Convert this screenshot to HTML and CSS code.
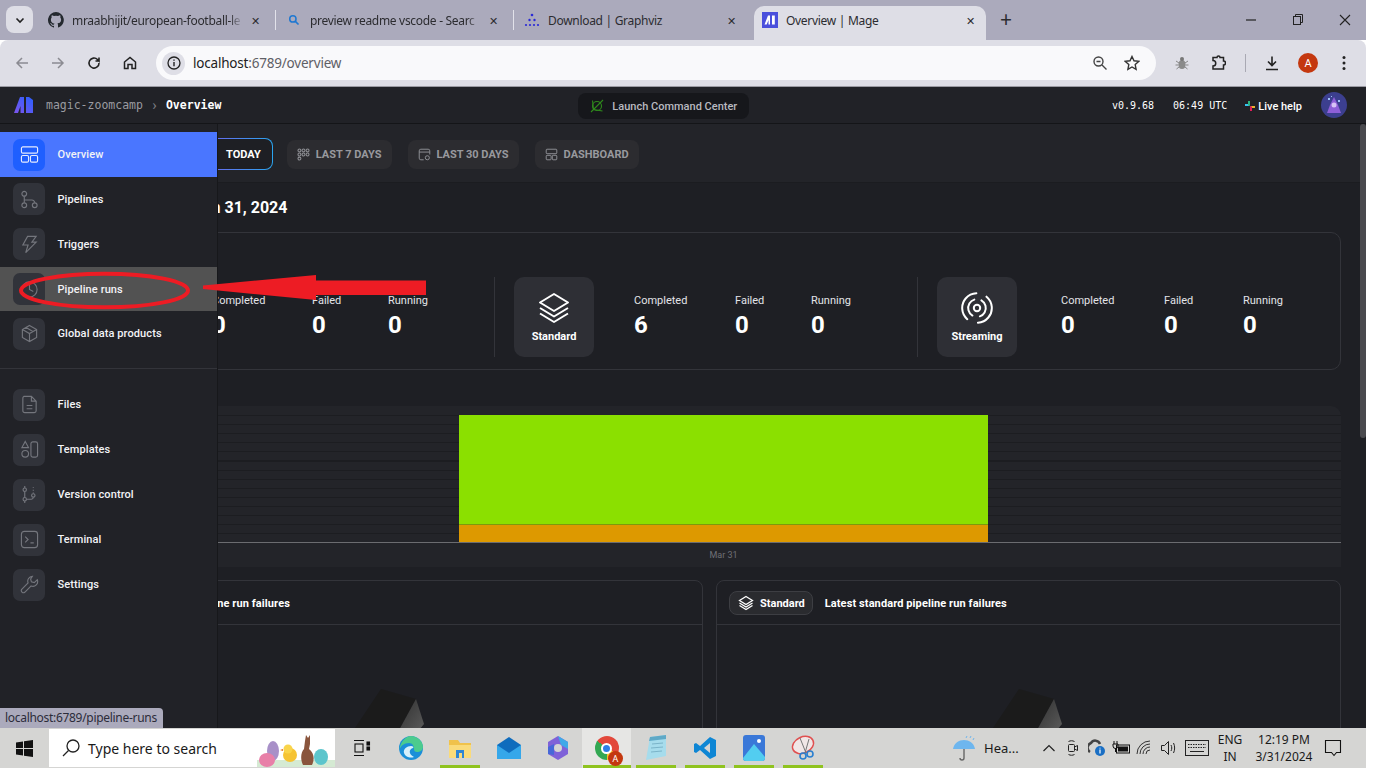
FILE: index.html
```html
<!DOCTYPE html>
<html lang="en">
<head>
    <meta charset="UTF-8">
    <title>Overview | Mage</title>
    <link rel="stylesheet" href="styles.css">
</head>
<body>
<div class="screen">

    <!-- Chrome tabs -->
    <div class="tabstrip">
        <button class="tab-search"><svg width="12" height="12" viewBox="0 0 12 12"><path d="M2.5 4.5 6 8l3.5-3.5" fill="none" stroke="#222" stroke-width="1.6"/></svg></button>
        <div class="tab">
            <svg class="favicon" viewBox="0 0 16 16"><path fill="#24292f" d="M8 0a8 8 0 0 0-2.5 15.6c.4.1.5-.2.5-.4v-1.4c-2.2.5-2.7-1-2.7-1-.4-.9-.9-1.2-.9-1.2-.7-.5.1-.5.1-.5.8.1 1.2.8 1.2.8.7 1.2 1.9.9 2.3.7.1-.5.3-.9.5-1.1-1.8-.2-3.6-.9-3.6-4 0-.9.3-1.6.8-2.1-.1-.2-.4-1 .1-2.1 0 0 .7-.2 2.2.8a7.6 7.6 0 0 1 4 0c1.5-1 2.2-.8 2.2-.8.4 1.1.2 1.9.1 2.1.5.6.8 1.3.8 2.1 0 3.1-1.9 3.7-3.7 3.9.3.3.6.8.6 1.5v2.2c0 .2.1.5.6.4A8 8 0 0 0 8 0z"/></svg>
            <span class="tab-title">mraabhijit/european-football-le</span>
            <span class="tab-close">✕</span>
        </div>
        <span class="tab-sep"></span>
        <div class="tab">
            <svg class="favicon favicon-small" viewBox="0 0 16 16"><circle cx="6.5" cy="6.5" r="4.2" fill="none" stroke="#1f78d1" stroke-width="2"/><path d="m9.5 9.5 4.5 4.5" stroke="#1f78d1" stroke-width="2.2"/></svg>
            <span class="tab-title">preview readme vscode - Searc</span>
            <span class="tab-close">✕</span>
        </div>
        <span class="tab-sep"></span>
        <div class="tab">
            <svg class="favicon" viewBox="0 0 16 16" fill="#2a2ad6"><circle cx="8" cy="3" r="1.3"/><circle cx="5.5" cy="8" r="1.2"/><circle cx="10.5" cy="8" r="1.2"/><circle cx="2" cy="13" r="1.1"/><circle cx="6" cy="13" r="1.1"/><circle cx="10" cy="13" r="1.1"/><circle cx="14" cy="13" r="1.1"/></svg>
            <span class="tab-title tab-title-plain">Download | Graphviz</span>
            <span class="tab-close">✕</span>
        </div>
        <div class="tab tab-active">
            <svg class="favicon" viewBox="0 0 16 16"><rect width="16" height="16" fill="#4a4fdc"/><path d="M2.5 12.5 6 3.5h2v9H6.5V8l-1.8 4.5zM10 3.500h2.800v9H10z" fill="#fff"/></svg>
            <span class="tab-title tab-title-plain">Overview | Mage</span>
            <span class="tab-close">✕</span>
        </div>
        <span class="tab-new">+</span>
        <div class="window-controls">
            <svg width="46" height="14" viewBox="0 0 46 14"><path d="M18 7h10" stroke="#222" stroke-width="1.2"/></svg>
            <svg width="46" height="14" viewBox="0 0 46 14" fill="none" stroke="#222"><rect x="19.5" y="3.5" width="7" height="8"/><path d="M21.5 3.5v-2h7v8h-2"/></svg>
            <svg width="46" height="14" viewBox="0 0 46 14"><path d="m20 2 10 10m0-10L20 12" stroke="#222" stroke-width="1.1"/></svg>
        </div>
    </div>

    <!-- Chrome toolbar -->
    <div class="toolbar">
        <svg class="tool" viewBox="0 0 16 16"><path d="M14 8H3m5-5L3 8l5 5" fill="none" stroke="#8b8b92" stroke-width="1.5"/></svg>
        <svg class="tool" viewBox="0 0 16 16"><path d="M2 8h11M8 3l5 5-5 5" fill="none" stroke="#8b8b92" stroke-width="1.5"/></svg>
        <svg class="tool" viewBox="0 0 16 16"><path d="M13 8a5 5 0 1 1-1.5-3.5L13 6V2.500M13 6H9.500" fill="none" stroke="#222" stroke-width="1.6"/></svg>
        <svg class="tool" viewBox="0 0 16 16"><path d="M2.500 7 8 2.500 13.500 7v6.500H10V9.500H6v4H2.500z" fill="none" stroke="#222" stroke-width="1.5"/></svg>
        <div class="omnibox">
            <span class="site-info"><svg width="14" height="14" viewBox="0 0 14 14"><circle cx="7" cy="7" r="6" fill="none" stroke="#222" stroke-width="1.3"/><path d="M7 6v4.200M7 3.500v1.300" stroke="#222" stroke-width="1.4"/></svg></span>
            <span class="url">localhost<span class="url-path">:6789/overview</span></span>
            <svg class="omni-icon" viewBox="0 0 16 16" fill="none" stroke="#444" stroke-width="1.4"><circle cx="6.5" cy="6.5" r="4.5"/><path d="m10 10 4.500 4.500M4.500 6.500h4"/></svg>
            <svg class="omni-icon" viewBox="0 0 16 16"><path d="m8 1.500 2 4.300 4.700.6-3.500 3.200.9 4.700L8 12l-4.100 2.300.9-4.700-3.500-3.200L6 5.800z" fill="none" stroke="#333" stroke-width="1.4"/></svg>
        </div>
        <div class="toolbar-right">
            <svg class="tool" viewBox="0 0 16 16"><ellipse cx="8" cy="9.500" rx="3.500" ry="4.500" fill="#8a8a8a"/><circle cx="8" cy="4" r="2" fill="#777"/><path d="M2 6l3 2M14 6l-3 2M1.500 10h3m10 0h-3M2.500 14l2.500-2m8.500 2L11 12" stroke="#888"/></svg>
            <svg class="tool" viewBox="0 0 16 16"><path d="M3 2.500h4a1.500 1.500 0 0 1 3 0h3.500V6a1.500 1.500 0 0 1 0 4v4H3v-3a2 2 0 0 0 0-5.500z" fill="none" stroke="#222" stroke-width="1.5"/></svg>
            <span class="toolbar-sep"></span>
            <svg class="tool" viewBox="0 0 16 16"><path d="M8 1.500V10M4 6.500 8 10.500l4-4M2 14.500h12" fill="none" stroke="#222" stroke-width="1.6"/></svg>
            <span class="profile">A</span>
            <svg class="tool" viewBox="0 0 16 16" fill="#222"><circle cx="8" cy="2.500" r="1.500"/><circle cx="8" cy="8" r="1.500"/><circle cx="8" cy="13.500" r="1.500"/></svg>
        </div>
    </div>

    <!-- Mage header -->
    <header class="app-header">
        <svg class="logo" width="20" height="16" viewBox="0 0 20 16">
            <defs><linearGradient id="logoGrad" x1="0" y1="1" x2="1" y2="0"><stop offset="0" stop-color="#7d55ec"/><stop offset="1" stop-color="#2a60fe"/></linearGradient></defs>
            <path d="M0 16 6 0h4v16H6.500V9L4 16zM12 0h3l4 3v13h-7z" fill="url(#logoGrad)"/>
        </svg>
        <span class="crumb">magic-zoomcamp</span>
        <span class="crumb-arrow">›</span>
        <span class="crumb-current">Overview</span>
        <div class="header-center">
            <div class="launch">
                <svg width="16" height="16" viewBox="0 0 16 16" fill="none" stroke="#2f8a1c" stroke-width="1.1"><circle cx="8" cy="8" r="4.500"/><path d="M2 14 14 2M3.500 2.500c.5 3 .5 6 1 9 3 .5 6 1 9 1.500"/></svg>
                Launch Command Center
            </div>
        </div>
        <span class="version">v0.9.68</span>
        <span class="clock">06:49 UTC</span>
        <span class="live-help">
            <svg width="10" height="10" viewBox="0 0 10 10"><rect x="0" y="3" width="4.500" height="2" fill="#36c5f0"/><rect x="3" y="0" width="2" height="4.500" fill="#2eb67d"/><rect x="5.500" y="5" width="4.500" height="2" fill="#ecb22e"/><rect x="5" y="5.500" width="2" height="4.500" fill="#e01e5a"/></svg>
            Live help
        </span>
        <span class="avatar"><svg width="18" height="20" viewBox="0 0 18 20"><path d="M9 2 5 10l-3 8h14l-3-8z" fill="#8e5fd8"/><circle cx="9" cy="10" r="2.500" fill="#d8c4f6"/><path d="M3 3h2v2H3zM13 5h2v2h-2zM6 1h1v1H6z" fill="#9fc0f5"/></svg></span>
    </header>

    <div class="app-body">
        <main class="content">
            <div class="filters">
                <button class="filter filter-active">
                    <svg width="16" height="16" viewBox="0 0 16 16" fill="none" stroke="#fff" stroke-width="1.2"><circle cx="8" cy="8" r="6"/></svg>
                    TODAY
                </button>
                <button class="filter">
                    <svg width="13" height="13" viewBox="0 0 16 16" fill="none" stroke="#8e8f94" stroke-width="1.3"><circle cx="3" cy="3" r="1.800"/><circle cx="8" cy="3" r="1.800"/><circle cx="13" cy="3" r="1.800"/><circle cx="3" cy="8" r="1.800"/><circle cx="8" cy="8" r="1.800"/><circle cx="13" cy="8" r="1.800"/><circle cx="3" cy="13" r="1.800"/></svg>
                    LAST 7 DAYS
                </button>
                <button class="filter">
                    <svg width="13" height="13" viewBox="0 0 16 16" fill="none" stroke="#8e8f94" stroke-width="1.2"><path d="M7 14.500H3.500a2 2 0 0 1-2-2v-9a2 2 0 0 1 2-2h9a2 2 0 0 1 2 2V8M1.500 5h13"/><circle cx="11.500" cy="12" r="2.500"/></svg>
                    LAST 30 DAYS
                </button>
                <button class="filter">
                    <svg width="13" height="13" viewBox="0 0 16 16" fill="none" stroke="#8e8f94" stroke-width="1.2"><rect x="1.500" y="1.500" width="13" height="5.500" rx="1"/><rect x="1.500" y="9" width="6" height="5.500" rx="1"/><rect x="9" y="9" width="5.500" height="5.500" rx="1"/></svg>
                    DASHBOARD
                </button>
            </div>

            <div class="content-inner">
                <h2 class="date-title">Jan 31, 2024</h2>

                <section class="stats-card">
                    <div class="stat-group stat-group-first">
                        <div class="stat-tile"></div>
                        <div class="stats">
                            <div><p class="stat-label">Completed</p><p class="stat-value">0</p></div>
                            <div><p class="stat-label">Failed</p><p class="stat-value">0</p></div>
                            <div><p class="stat-label">Running</p><p class="stat-value">0</p></div>
                        </div>
                    </div>
                    <div class="stat-group">
                        <div class="stat-tile">
                            <svg width="32" height="32" viewBox="0 0 32 32" fill="none" stroke="#fff" stroke-width="2" stroke-linejoin="round"><path d="M16 2 30 10.500 16 19 2 10.500z"/><path d="m2 16 14 8.500L30 16M2 21.500 16 30l14-8.500"/></svg>
                            <span>Standard</span>
                        </div>
                        <div class="stats">
                            <div><p class="stat-label">Completed</p><p class="stat-value">6</p></div>
                            <div><p class="stat-label">Failed</p><p class="stat-value">0</p></div>
                            <div><p class="stat-label">Running</p><p class="stat-value">0</p></div>
                        </div>
                    </div>
                    <div class="stat-group">
                        <div class="stat-tile">
                            <svg width="32" height="32" viewBox="0 0 32 32" fill="none" stroke="#fff" stroke-width="2" stroke-linecap="round"><circle cx="16" cy="16" r="3.200"/><circle cx="16" cy="16" r="8.800" stroke-dasharray="20 7.650" transform="rotate(-60 16 16)"/><circle cx="16" cy="16" r="14.800" stroke-dasharray="35 11.500" transform="rotate(-50 16 16)"/></svg>
                            <span>Streaming</span>
                        </div>
                        <div class="stats stats-wide">
                            <div><p class="stat-label">Completed</p><p class="stat-value">0</p></div>
                            <div><p class="stat-label">Failed</p><p class="stat-value">0</p></div>
                            <div><p class="stat-label">Running</p><p class="stat-value">0</p></div>
                        </div>
                    </div>
                </section>

                <section class="chart">
                    <div class="plot">
                        <div class="bar">
                            <div class="bar-success"></div>
                            <div class="bar-failed"></div>
                        </div>
                    </div>
                    <div class="x-axis"><span>Mar 31</span></div>
                </section>

                <div class="failures">
                    <section class="failure-card">
                        <div class="failure-head">
                            <span class="tag"><svg width="16" height="16" viewBox="0 0 32 32" fill="none" stroke="#fff" stroke-width="2.5"><path d="M16 3 29 11 16 19 3 11z"/><path d="m3 16 13 8 13-8M3 21l13 8 13-8"/></svg>All</span>
                            <span class="failure-title">Latest pipeline run failures</span>
                        </div>
                        <svg class="empty-art" width="90" height="60" viewBox="0 0 90 60"><path d="M39 6 74 16 50 60H3z" fill="#1b1b1b"/><path d="M74 16 82 41 66 60H50z" fill="url(#cubeSide)"/></svg>
                    </section>
                    <section class="failure-card">
                        <div class="failure-head">
                            <span class="tag"><svg width="16" height="16" viewBox="0 0 32 32" fill="none" stroke="#fff" stroke-width="2.5"><path d="M16 3 29 11 16 19 3 11z"/><path d="m3 16 13 8 13-8M3 21l13 8 13-8"/></svg>Standard</span>
                            <span class="failure-title">Latest standard pipeline run failures</span>
                        </div>
                        <svg class="empty-art" width="90" height="60" viewBox="0 0 90 60">
                            <defs><linearGradient id="cubeSide" x1="0" y1="0" x2="1" y2="1"><stop offset="0" stop-color="#2a2a2a"/><stop offset="1" stop-color="#626262"/></linearGradient></defs>
                            <path d="M39 6 74 16 50 60H3z" fill="#1b1b1b"/><path d="M74 16 82 41 66 60H50z" fill="url(#cubeSide)"/>
                        </svg>
                    </section>
                </div>
            </div>
        </main>
        <div class="scrollbar"><div class="scroll-thumb"></div></div>

        <!-- Nav flyout over the page -->
        <nav class="sidebar">
            <a class="nav-item nav-selected"><span class="nav-icon"><svg viewBox="0 0 20 20"><rect x="1.500" y="2" width="17" height="6.500" rx="1.500"/><rect x="1.500" y="11" width="7.500" height="7" rx="1.500"/><rect x="11" y="11" width="7.500" height="7" rx="1.500"/></svg></span>Overview</a>
            <a class="nav-item"><span class="nav-icon"><svg viewBox="0 0 20 20"><circle cx="4.500" cy="4" r="2.500"/><circle cx="4.500" cy="16" r="2.500"/><circle cx="15.500" cy="16" r="2.500"/><path d="M4.500 6.500v7M4.500 10.500h8a3 3 0 0 1 3 3"/></svg></span>Pipelines</a>
            <a class="nav-item"><span class="nav-icon"><svg viewBox="0 0 20 20"><path d="M8 1.500h9l-4.500 6H17L6 18.500l2.500-8H3z"/></svg></span>Triggers</a>
            <a class="nav-item nav-hover"><span class="nav-icon"><svg viewBox="0 0 20 20"><circle cx="10" cy="10" r="8"/><path d="M10 5v5l4 2"/></svg></span>Pipeline runs</a>
            <a class="nav-item"><span class="nav-icon"><svg viewBox="0 0 20 20"><path d="m10 1.500 7.500 4.300v8.400L10 18.500l-7.500-4.300V5.800zM2.500 5.800 10 10l7.500-4.200M10 10v8.500M6 3.500l7.500 4.500"/></svg></span>Global data products</a>
            <div class="nav-divider"></div>
            <a class="nav-item"><span class="nav-icon"><svg viewBox="0 0 20 20"><path d="M4 1.500h8l5 5v10a2 2 0 0 1-2 2H5a2 2 0 0 1-2-2v-13a2 2 0 0 1 1-2zM12 1.500v5h5M7 11h6M7 14.500h6"/></svg></span>Files</a>
            <a class="nav-item"><span class="nav-icon"><svg viewBox="0 0 20 20"><path d="M5.500 1.500 9 8H2z"/><circle cx="5.500" cy="14.500" r="3.500"/><rect x="11.500" y="2" width="7" height="16" rx="2"/></svg></span>Templates</a>
            <a class="nav-item"><span class="nav-icon"><svg viewBox="0 0 20 20"><circle cx="5" cy="5" r="1.800"/><circle cx="5" cy="15" r="1.800"/><circle cx="14" cy="11" r="1.800"/><path d="M5 1v2.200M5 6.800v6.400M5 16.800V19M6.800 15H12a2 2 0 0 0 2-2v-.2M14 2v1M14 5v1M14 8v1"/></svg></span>Version control</a>
            <a class="nav-item"><span class="nav-icon"><svg viewBox="0 0 20 20"><rect x="1.500" y="1.500" width="17" height="17" rx="3"/><path d="m5.500 7 3 3-3 3M11 13.500h3.500"/></svg></span>Terminal</a>
            <a class="nav-item"><span class="nav-icon"><svg viewBox="0 0 20 20"><path d="M13 1.500a5 5 0 0 0-4.500 6.800L1.800 15a2.300 2.300 0 0 0 3.200 3.200l6.700-6.700A5 5 0 0 0 18.200 5l-3.200 3-3-.8-.8-3z"/></svg></span>Settings</a>
        </nav>

        <div class="status-bubble">localhost:6789/pipeline-runs</div>
    </div>

    <!-- Windows taskbar -->
    <div class="taskbar">
        <svg class="win-logo" width="17" height="17" viewBox="0 0 17 17" fill="#111"><path d="M0 2.400 7 1.400V8H0zM8 1.300 17 0v8H8zM0 9h7v6.600L0 14.600zM8 9h9v8l-9-1.300z"/></svg>
        <div class="search-box">
            <svg width="20" height="20" viewBox="0 0 20 20" fill="none" stroke="#222" stroke-width="1.3"><circle cx="12" cy="8" r="6"/><path d="M7.500 12.500 2 18"/></svg>
            <span class="search-text">Type here to search</span>
            <svg class="easter" width="78" height="38" viewBox="0 0 78 38">
                <rect x="0" y="31" width="78" height="7" fill="#d5ead3"/>
                <ellipse cx="16" cy="22" rx="6" ry="10" fill="#a890c8"/>
                <ellipse cx="10" cy="31" rx="8" ry="7" fill="#e87fa8"/>
                <ellipse cx="64" cy="28" rx="7" ry="8" fill="#5cc5cc"/>
                <circle cx="33" cy="26" r="7" fill="#f6c334"/><circle cx="31" cy="20" r="4.500" fill="#f9d44a"/><path d="m26 20-3 1 3 1z" fill="#e2701a"/>
                <path d="M46 36c-3-6-2-13 1-16l1-8 1-6 2 3 2-3v9l-1 5c5 4 6 10 3 16z" fill="#8a553d"/>
            </svg>
        </div>
        <div class="task-apps">
            <span class="task-app"><svg width="18" height="18" viewBox="0 0 18 18" fill="none" stroke="#111" stroke-width="1.1"><path d="M1 1.500h10M1 16.500h10"/><rect x="2" y="5" width="8" height="8"/><rect x="14" y="3" width="2.500" height="3" fill="#111"/><rect x="14" y="8" width="2.500" height="3" fill="#111"/></svg></span>
            <span class="task-app"><svg width="26" height="26" viewBox="0 0 26 26"><circle cx="13" cy="13" r="12" fill="#1b8fd8"/><path d="M1.500 15C2 7 8 1 13 1c6 0 12 5 12 11 0 3-3 5-6 5-2 0-3-1-3-3 0-3-1.500-6-5-6-5 0-8.500 3-9.500 7z" fill="#4ccb8e"/><path d="M13 11c2 0 3 1 2 2-4 1-5 6 1 9-3 1-8 1-10-4-1-4 3-7 7-7z" fill="#d6f0fb"/></svg></span>
            <span class="task-app task-open"><svg width="24" height="22" viewBox="0 0 24 22"><path d="M1 3h9l2 3h11v15H1z" fill="#f0c24b"/><rect x="1" y="8" width="22" height="13" fill="#fadb7a"/><rect x="8" y="13" width="8" height="8" fill="#2f86d4"/><rect x="11" y="16" width="3" height="5" fill="#fadb7a"/></svg></span>
            <span class="task-app"><svg width="26" height="24" viewBox="0 0 26 24"><path d="M1 9 13 1l12 8v14H1z" fill="#0f6cbd"/><path d="m1 9 12 8 12-8v14H1z" fill="#35a7ea"/></svg></span>
            <span class="task-app"><svg width="22" height="26" viewBox="0 0 22 26"><path d="M11 1 21 7v12l-10 6L1 19V7z" fill="#7f62d8"/><path d="M11 1 21 7v7l-7-4z" fill="#3fa9e8"/><path d="M1 12l6-3v11l-6-1z" fill="#4668d8"/><path d="M11 9a4 4 0 1 1 0 8 4 4 0 0 1 0-8z" fill="#d4d4d4"/></svg></span>
            <span class="task-app task-open task-active"><span class="chrome-icon"><span class="chrome-dot"></span></span><span class="chrome-badge">A</span></span>
            <span class="task-app task-open"><svg width="24" height="28" viewBox="0 0 24 28"><path d="M6 3 22 1v21L2 26z" fill="#a6dcec"/><path d="M6 3 22 1v4L5 7z" fill="#5fa9c7"/><path d="M8 10l11-1M7 14l12-1M7 18l11-1" stroke="#7bb4c9"/></svg></span>
            <span class="task-app task-open"><svg width="24" height="24" viewBox="0 0 24 24"><path d="M17 1 23 4v16l-6 3L7 14l-4 3-2-1V8l2-1 4 3z" fill="#0e86d4"/><path d="M17 7v10l-6-5z" fill="#d4d4d4"/></svg></span>
            <span class="task-app task-open"><svg width="24" height="28" viewBox="0 0 24 28"><rect x="1" y="1" width="22" height="26" rx="3" fill="#3a78d8"/><path d="M1 24 12 10l11 13v1a3 3 0 0 1-3 3H4a3 3 0 0 1-3-3z" fill="#52cdf0"/><circle cx="17" cy="7" r="2" fill="#fff"/></svg></span>
            <span class="task-app task-open"><svg width="26" height="26" viewBox="0 0 26 26" fill="none"><ellipse cx="13" cy="10" rx="11" ry="8" fill="#f1e6e6" stroke="#e05050" stroke-width="1.5" transform="rotate(-25 13 10)"/><path d="m10 3 6 15M19 4l-4 14" stroke="#777"/><circle cx="13" cy="21" r="3" stroke="#2a7fd0" stroke-width="1.6"/><circle cx="20" cy="19" r="3" stroke="#2a7fd0" stroke-width="1.6"/></svg></span>
        </div>
        <div class="tray">
            <span class="weather">
                <svg width="24" height="26" viewBox="0 0 24 26"><path d="M1 14C2 8 7 5 12 5s10 3 11 9z" fill="#6eb6ee"/><path d="M12 14v9a2 2 0 0 1-4 0" stroke="#666" stroke-width="1.4" fill="none"/><path d="m15 1-1 2m5-2-1 2m4 0-1 2" stroke="#6eb6ee"/></svg>
                Hea...
            </span>
            <div class="tray-icons">
                <svg width="14" height="14" viewBox="0 0 14 14"><path d="m1.500 10 5.500-5.500 5.500 5.500" fill="none" stroke="#222" stroke-width="1.2"/></svg>
                <svg width="14" height="18" viewBox="0 0 14 18" fill="none" stroke="#222"><rect x="2.500" y="5.500" width="6" height="7" rx="1"/><path d="m8.500 8 3-1.500v5l-3-1.500M2.500 2.500c2-1 4-1 6 0M2.500 15.500c2 1 4 1 6 0"/></svg>
                <svg width="18" height="18" viewBox="0 0 18 18"><path d="M2 13a5 5 0 0 1 1-9 5 5 0 0 1 9 1" fill="none" stroke="#444" stroke-width="2.5"/><circle cx="12" cy="12" r="5" fill="#1a6fc4"/><path d="M12 10.500v4M12 8.800v.8" stroke="#fff" stroke-width="1.2"/></svg>
                <svg width="18" height="16" viewBox="0 0 18 16"><rect x="4.500" y="5" width="13" height="8" fill="none" stroke="#111"/><rect x="6" y="6.500" width="10" height="5" fill="#111"/><path d="M2 1v3M5 1v3M1 4h5v2a2 2 0 0 1-5 0zM3.500 8v4" stroke="#111" fill="none"/></svg>
                <svg width="18" height="16" viewBox="0 0 18 16" fill="none" stroke="#333"><path d="M1 14A13 13 0 0 1 14 1M4 14A10 10 0 0 1 14 4M7 14a7 7 0 0 1 7-7M10 14a4 4 0 0 1 4-4"/></svg>
                <svg width="18" height="16" viewBox="0 0 18 16" fill="none" stroke="#222"><path d="M1.500 5.500h3l4-4v13l-4-4h-3zM11 5c1 2 1 4 0 6M13.500 3c1.500 3 1.500 7 0 10"/></svg>
                <svg class="tray-keyboard" width="24" height="16" viewBox="0 0 24 16" fill="none" stroke="#222"><rect x=".5" y=".5" width="23" height="15"/><path d="M3 4.500h18M3 7.500h18" stroke-dasharray="1.500 1"/><path d="M5 11.500h14"/></svg>
            </div>
            <div class="tray-lang">ENG<br>IN</div>
            <div class="tray-clock">12:19 PM<br>3/31/2024</div>
            <svg class="tray-notify" width="18" height="18" viewBox="0 0 18 18"><path d="M1.500 1.500h15v12h-4l-2.500 3-2.500-3h-6z" fill="none" stroke="#111" stroke-width="1.1"/></svg>
        </div>
    </div>

    <!-- Red markup drawn on top of the screenshot -->
    <svg class="markup" width="1366" height="768" viewBox="0 0 1366 768">
        <ellipse cx="104.5" cy="290.5" rx="83.5" ry="16.8" fill="none" stroke="#ed1c24" stroke-width="4"/>
        <path d="M203 285.500v3.500L316 300v-5h110v-14.500H316V275z" fill="#ed1c24"/>
    </svg>
</div>
</body>
</html>
```

FILE: styles.css
```css
* {
    box-sizing: border-box;
}

html, body {
    margin: 0;
    background: #fff;
    overflow: hidden;
}

p, h2 {
    margin: 0;
}

svg {
    display: block;
    flex: none;
}

.screen {
    position: relative;
    display: flex;
    flex-direction: column;
    width: 1366px;
    height: 768px;
    overflow: hidden;
    font-family: Roboto, Arial, sans-serif;
}

/* Chrome tabs */
.tabstrip {
    display: flex;
    align-items: flex-start;
    flex: none;
    height: 40px;
    padding: 6px 0 0 6px;
    background: #abaabc;
    color: #2c2c30;
    font-family: "Noto Sans", sans-serif;
    font-size: 12px;
}

.tab-search {
    flex: none;
    display: flex;
    align-items: center;
    justify-content: center;
    width: 27px;
    height: 27px;
    margin-right: 5px;
    padding: 0;
    border: none;
    border-radius: 8px;
    background: #dedee6;
}

.tab {
    display: flex;
    align-items: center;
    flex: none;
    width: 237px;
    height: 28px;
    padding: 0 8px 0 10px;
}

.favicon {
    width: 16px;
    height: 16px;
    margin-right: 8px;
}

.favicon-small {
    width: 12px;
    height: 12px;
    margin: 0 10px 0 2px;
}

.tab-title {
    flex: 1;
    overflow: hidden;
    letter-spacing: -0.3px;
    white-space: nowrap;
    -webkit-mask-image: linear-gradient(to right, #000 92%, transparent);
    mask-image: linear-gradient(to right, #000 92%, transparent);
}

.tab-title-plain {
    -webkit-mask-image: none;
    mask-image: none;
}

.tab-close {
    width: 24px;
    text-align: center;
    font-size: 11px;
}

.tab-sep {
    flex: none;
    width: 1px;
    height: 20px;
    margin-top: 4px;
    background: #e2e2ea;
}

.tab-active {
    width: 232px;
    height: 34px;
    margin-left: 3px;
    padding: 0 4px 6px 8px;
    border-radius: 10px 10px 0 0;
    background: #dedee6;
}

.tab-new {
    width: 40px;
    height: 28px;
    text-align: center;
    font-size: 21px;
    line-height: 26px;
}

.window-controls {
    display: flex;
    align-items: center;
    height: 28px;
    margin-left: auto;
}

/* Chrome toolbar */
.toolbar {
    display: flex;
    align-items: center;
    flex: none;
    height: 47px;
    padding: 0 14px;
    border-bottom: 1px solid #9b9ba3;
    border-radius: 8px 8px 0 0;
    background: #dedee6;
}

.tool {
    width: 16px;
    height: 16px;
    margin-right: 20px;
}

.omnibox {
    display: flex;
    flex: none;
    align-items: center;
    width: 1000px;
    height: 34px;
    margin-left: -2px;
    padding: 0 16px 0 6px;
    border-radius: 17px;
    background: #f9f9fb;
}

.site-info {
    display: flex;
    align-items: center;
    justify-content: center;
    width: 23px;
    height: 23px;
    border-radius: 50%;
    background: #dedee6;
}

.url {
    flex: 1;
    margin-left: 8px;
    color: #222;
    font-family: "Noto Sans", sans-serif;
    font-size: 13.5px;
    letter-spacing: -0.2px;
}

.url-path {
    color: #5f6066;
}

.omni-icon {
    width: 16px;
    height: 16px;
    margin-left: 16px;
}

.toolbar-right {
    display: flex;
    align-items: center;
    margin-left: 18px;
}

.toolbar-sep {
    width: 1px;
    height: 18px;
    margin: 0 18px 0 -1px;
    background: #a9a9b3;
}

.profile {
    display: flex;
    align-items: center;
    justify-content: center;
    width: 20px;
    height: 20px;
    margin: 0 18px 0 -2px;
    border-radius: 50%;
    background: #c4380f;
    color: #fff;
    font-size: 11px;
}

/* Mage header */
.app-header {
    display: flex;
    align-items: center;
    flex: none;
    height: 37px;
    padding: 0 19px 0 14px;
    border-bottom: 1px solid #141518;
    background: #212227;
    color: #fff;
    font-family: "DejaVu Sans Mono", monospace;
}

.crumb {
    margin-left: 12px;
    color: #9b9ca1;
    font-size: 11.5px;
}

.crumb-arrow {
    width: 23px;
    color: #7c7d82;
    font-family: Roboto, sans-serif;
    font-size: 15px;
    text-align: center;
}

.crumb-current {
    font-size: 11.5px;
    font-weight: 700;
}

.header-center {
    flex: 1;
    display: flex;
    padding-left: 357px;
}

.launch {
    display: flex;
    align-items: center;
    gap: 7px;
    width: 171px;
    height: 26px;
    margin-top: 2px;
    padding-left: 11px;
    border-radius: 8px;
    background: #16171b;
    color: #b9bac0;
    font-family: Roboto, sans-serif;
    font-size: 11px;
    font-weight: 500;
}

.version, .clock {
    font-size: 10px;
}

.clock {
    margin-left: 19px;
}

.live-help {
    display: flex;
    align-items: center;
    gap: 3px;
    margin: 2px 0 0 18px;
    font-family: Roboto, sans-serif;
    font-size: 11px;
    font-weight: 500;
}

.avatar {
    display: flex;
    align-items: center;
    justify-content: center;
    width: 26px;
    height: 26px;
    margin-left: 19px;
    border-radius: 50%;
    background: #3c3f8f;
}

/* Page */
.app-body {
    position: relative;
    display: flex;
    flex: 1;
    min-height: 0;
    background: #1e1f24;
}

.content {
    width: 1360px;
    color: #fff;
    overflow: hidden;
}

.filters {
    display: flex;
    align-items: center;
    gap: 16px;
    height: 59px;
    padding: 2px 0 0 191px;
    border-bottom: 1px solid #1b1c20;
    background: #232429;
}

.filter {
    display: flex;
    align-items: center;
    gap: 6px;
    height: 29px;
    padding: 0 10px;
    border: none;
    border-radius: 8px;
    background: #2c2c30;
    color: #98999e;
    font-family: Roboto, sans-serif;
    font-size: 11px;
    font-weight: 700;
}

.filter-active {
    gap: 7px;
    height: 32px;
    margin-right: -2px;
    padding: 0 11px;
    border: 1.5px solid transparent;
    background: linear-gradient(#1e1f24, #1e1f24) padding-box,
                linear-gradient(90deg, #7d55ec, #2aa5f0) border-box;
    color: #fff;
}

.content-inner {
    padding: 0 19px 0 78px;
}

.date-title {
    height: 49px;
    padding-left: 116px;
    font-size: 16px;
    font-weight: 700;
    line-height: 49px;
}

.stats-card {
    display: flex;
    align-items: flex-end;
    height: 138px;
    padding-bottom: 12px;
    border: 1px solid #33343a;
    border-radius: 10px;
}

.stat-group {
    display: flex;
    flex: none;
    width: 423px;
    height: 80px;
    padding-left: 19px;
    border-left: 1px solid #33343a;
}

.stat-group-first {
    width: 415px;
    padding-left: 13px;
    border-left: none;
}

.stat-tile {
    display: flex;
    flex-direction: column;
    align-items: center;
    width: 80px;
    height: 80px;
    padding-top: 15px;
    border-radius: 10px;
    background: #2e2f35;
    font-size: 11px;
    font-weight: 700;
}

.stat-tile span {
    margin-top: 6px;
    line-height: 14px;
}

.stats {
    display: grid;
    grid-template-columns: 101px 76px auto;
    margin-left: 40px;
    padding-top: 17px;
}

.stat-group-first .stats {
    grid-template-columns: 100px 76px auto;
}

.stats-wide {
    grid-template-columns: 103px 79px auto;
    margin-left: 44px;
}

.stat-label {
    color: #e3e4e8;
    font-size: 11px;
    line-height: 14px;
}

.stat-value {
    margin-top: 3px;
    font-size: 24px;
    font-weight: 700;
    line-height: 28px;
}

.chart {
    height: 161px;
    margin-top: 36px;
    padding-top: 9px;
    border-radius: 10px 10px 0 0;
    background: #232429;
}

.plot {
    height: 128px;
    padding-left: 381px;
    border-bottom: 1px solid #6b6c70;
    background: repeating-linear-gradient(to bottom, #1c1d21 0, #1c1d21 1px, transparent 1px, transparent 9.1px);
}

.bar {
    display: flex;
    flex-direction: column;
    width: 529px;
    height: 127px;
}

.bar-success {
    flex: 1;
    background: #8be000;
}

.bar-failed {
    flex: none;
    height: 18px;
    border-top: 1px solid #7d9a0c;
    background: #dd9900;
}

.x-axis {
    width: 529px;
    margin-left: 381px;
    padding-top: 6px;
    color: #6f7076;
    font-size: 9px;
    line-height: 13px;
    text-align: center;
}

.failures {
    display: grid;
    grid-template-columns: 625px 625px;
    gap: 13px;
    margin-top: 13px;
}

.failure-card {
    height: 300px;
    border: 1px solid #33343a;
    border-radius: 8px;
}

.failure-head {
    display: flex;
    align-items: center;
    gap: 12px;
    height: 44px;
    padding: 1px 0 0 12px;
    border-bottom: 1px solid #33343a;
}

.tag {
    display: flex;
    align-items: center;
    gap: 6px;
    height: 24px;
    padding: 0 7px 0 8px;
    border: 1px solid #3d3e43;
    border-radius: 8px;
    background: #2a2b2f;
    font-size: 11px;
    font-weight: 700;
}

.failure-title {
    font-size: 11px;
    font-weight: 700;
    letter-spacing: 0.1px;
}

.empty-art {
    margin: 58px 0 0 263px;
}

.scrollbar {
    width: 6px;
    background: #1e1f24;
}

.scroll-thumb {
    height: 314px;
    border-radius: 3px;
    background: #4a4a4e;
}

/* Nav flyout */
.sidebar {
    position: absolute;
    top: 0;
    left: 0;
    bottom: 0;
    width: 218px;
    padding-top: 8.2px;
    border-right: 1px solid #17181b;
    background: #212227;
}

.nav-item {
    display: flex;
    align-items: center;
    gap: 12.5px;
    height: 44.8px;
    padding-left: 13px;
    color: #f2f3f6;
    font-size: 11px;
    font-weight: 500;
    letter-spacing: 0.1px;
}

.nav-divider ~ .nav-item {
    height: 45px;
}

.nav-selected {
    background: #4a76ff;
}

.nav-hover {
    padding-top: 1px;
    background: #525252;
}

.nav-icon {
    display: flex;
    align-items: center;
    justify-content: center;
    width: 32px;
    height: 32px;
    border-radius: 7px;
    background: #31333a;
}

.nav-icon svg {
    width: 19px;
    height: 19px;
    fill: none;
    stroke: #74767d;
    stroke-width: 1.2;
}

.nav-selected .nav-icon {
    background: #1f5fff;
}

.nav-selected .nav-icon svg {
    stroke: #e6ecff;
}

.nav-divider {
    height: 1px;
    margin: 12px 0 13px;
    background: #33343a;
}

.status-bubble {
    position: absolute;
    left: 0;
    bottom: 0;
    height: 20px;
    padding: 0 6px 0 5px;
    border-radius: 0 4px 0 0;
    background: #abaabc;
    color: #2c2c3a;
    font-family: "Noto Sans", sans-serif;
    font-size: 12px;
    letter-spacing: -0.3px;
    line-height: 20px;
}

/* Windows taskbar */
.taskbar {
    display: flex;
    align-items: center;
    flex: none;
    height: 40px;
    background: #d5d5d3;
    color: #1a1a1a;
    font-family: "Noto Sans", sans-serif;
}

.win-logo {
    margin: 0 16px;
}

.search-box {
    display: flex;
    align-items: center;
    width: 286px;
    height: 38px;
    padding-left: 12px;
    background: #fff;
}

.search-text {
    flex: 1;
    margin-left: 7px;
    font-size: 14px;
    white-space: nowrap;
}

.task-apps {
    display: flex;
    margin-left: 2px;
}

.task-app {
    position: relative;
    display: flex;
    align-items: center;
    justify-content: center;
    width: 49px;
    height: 40px;
}

.task-open {
    background: linear-gradient(#8fc31f, #8fc31f) bottom / 40px 3px no-repeat;
}

.task-active {
    background: linear-gradient(#8fc31f, #8fc31f) bottom / 48px 3px no-repeat, #e6e6e4;
}

.chrome-icon {
    display: flex;
    align-items: center;
    justify-content: center;
    width: 24px;
    height: 24px;
    border-radius: 50%;
    background: conic-gradient(#e2483b 0 33%, #f6c02c 33% 50%, #34a853 50% 85%, #e2483b 85%);
}

.chrome-dot {
    width: 11px;
    height: 11px;
    border: 2px solid #fff;
    border-radius: 50%;
    background: #2f7fe8;
}

.chrome-badge {
    position: absolute;
    right: 8px;
    bottom: 2px;
    width: 15px;
    height: 15px;
    border-radius: 50%;
    background: #c4380f;
    color: #fff;
    font-size: 9px;
    line-height: 15px;
    text-align: center;
}

.tray {
    display: flex;
    align-items: center;
    flex: 1;
    padding-left: 125px;
}

.weather {
    display: flex;
    align-items: center;
    gap: 8px;
    width: 85px;
    font-size: 13px;
}

.tray-icons {
    display: grid;
    grid-auto-flow: column;
    grid-auto-columns: 24px;
    align-items: center;
    justify-items: center;
}

.tray-keyboard {
    margin-left: 8px;
}

.tray-lang, .tray-clock {
    font-size: 12px;
    line-height: 17px;
    text-align: center;
}

.tray-lang {
    width: 30px;
    margin-left: 10px;
}

.tray-clock {
    width: 70px;
    margin-left: 4px;
}

.tray-notify {
    margin-left: 5px;
}

.markup {
    position: absolute;
    top: 0;
    left: 0;
    pointer-events: none;
}
```
